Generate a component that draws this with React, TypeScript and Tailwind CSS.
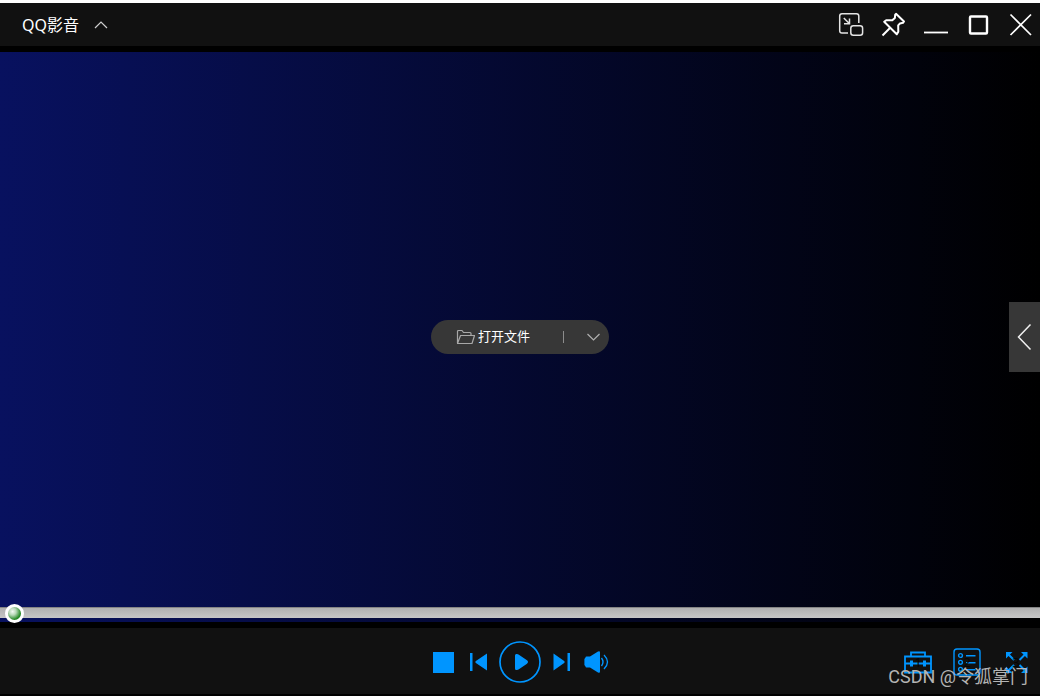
import { useState } from 'react';
import type { ReactNode } from 'react';

function WindowButton({ label, children }: { label: string; children: ReactNode }) {
  return (
    <button type="button" aria-label={label} className="size-6 text-white">
      <svg viewBox="0 0 24 24" fill="none" stroke="currentColor" className="size-6 overflow-visible">
        {children}
      </svg>
    </button>
  );
}

function TitleBar() {
  return (
    <header className="flex h-[43px] shrink-0 items-center justify-between bg-[#111111] pr-2 pl-[22px]">
      <button type="button" className="flex items-center gap-[15px] text-base text-white">
        <span>QQ影音</span>
        <svg viewBox="0 0 14 10" fill="none" stroke="#d0d0d0" strokeWidth="1.200" className="h-2.5 w-3.5">
          <path d="M1 8 7 2l6 6" />
        </svg>
      </button>
      <div className="flex items-center gap-[18px]">
        <WindowButton label="迷你模式">
          <path
            d="M8 20H2Q-.3 20-.3 17.700V3Q-.3 .7 2 .7H16.500Q18.800.7 18.800 3V10"
            strokeWidth="1.500"
            stroke="#e4e4e4"
          />
          <rect x="10.800" y="12.800" width="11.800" height="9.500" rx="2.500" strokeWidth="1.500" stroke="#e4e4e4" />
          <path d="M3.800 5 9.300 10.500M9.500 5.500v5.300H4" strokeWidth="1.500" stroke="#e4e4e4" />
        </WindowButton>
        <WindowButton label="置顶">
          <path
            d="M14 .8 22 8.500l-1 1.300-3 .6-1.800 2 .1 6.300-1.500 2.600L2.200 8.800l2-1.600 6.100.1 2.600-2.400.3-3.200zM7.700 15.300.5 22.500"
            strokeWidth="2"
            strokeLinejoin="round"
          />
        </WindowButton>
        <WindowButton label="最小化">
          <path d="M0 19.500h24" strokeWidth="1.800" />
        </WindowButton>
        <WindowButton label="最大化">
          <rect x="4" y="3.500" width="17" height="17" rx="1" strokeWidth="2.400" />
        </WindowButton>
        <WindowButton label="关闭">
          <path d="M2.500 1.500 23 22M23 1.500 2.500 22" strokeWidth="1.700" />
        </WindowButton>
      </div>
    </header>
  );
}

function OpenFile() {
  return (
    <div className="flex h-[34px] w-[178px] items-center rounded-full bg-[#373737] pr-2 pl-[25px]">
      <button type="button" className="flex items-center gap-[3px] text-[13px] text-white">
        <svg viewBox="0 0 19 16" fill="none" stroke="#a8a8a8" strokeWidth="1.200" strokeLinejoin="round" className="h-4 w-[19px]">
          <path d="M1.500 14V2.500Q1.500 1.500 2.500 1.500H6l1.500 2H14q1 0 1 1v2M1.500 14.500 4.500 6.500H18.500l-2.500 8z" />
        </svg>
        <span>打开文件</span>
      </button>
      <span className="ml-auto h-3 w-px bg-[#8c8c8c]" />
      <button type="button" aria-label="更多打开方式" className="ml-[22px] w-[15px]">
        <svg viewBox="0 0 15 10" fill="none" stroke="#b0b0b0" strokeWidth="1.200" className="h-2.5 w-[15px]">
          <path d="m1.500 2 6 6 6-6" />
        </svg>
      </button>
    </div>
  );
}

function Stage() {
  const [position, setPosition] = useState(5);
  return (
    <main className="flex flex-1 flex-col bg-linear-to-r/srgb from-[#08115f] to-black pt-[15px] pb-1">
      <div className="grid flex-1 grid-cols-[1fr_auto_1fr] items-center">
        <div />
        <OpenFile />
        <button
          type="button"
          aria-label="展开播放列表"
          className="flex h-[70px] w-[31px] items-center justify-center justify-self-end bg-[#373737]"
        >
          <svg viewBox="0 0 16 28" fill="none" stroke="#f0f0f0" strokeWidth="1.500" className="h-7 w-4">
            <path d="M13.500 1.500 1.500 14l12 12.500" />
          </svg>
        </button>
      </div>
      <input
        type="range"
        aria-label="播放进度"
        min={0}
        max={1000}
        value={position}
        onChange={(event) => setPosition(Number(event.target.value))}
        className="m-0 block h-[11px] w-full appearance-none overflow-visible border-t border-[#858585] bg-linear-to-b from-[#b0b0b0] to-[#c6c6c6] [&::-webkit-slider-thumb]:size-[19px] [&::-webkit-slider-thumb]:appearance-none [&::-webkit-slider-thumb]:rounded-full [&::-webkit-slider-thumb]:border-[3px] [&::-webkit-slider-thumb]:border-white [&::-webkit-slider-thumb]:bg-[radial-gradient(circle_at_35%_35%,#f4faf4_0%,#b7d8b7_30%,#2f8f2f_65%,#067006_85%)]"
      />
    </main>
  );
}

function Transport() {
  return (
    <div className="flex items-center gap-3 text-[#0095ff]">
      <button type="button" aria-label="停止">
        <svg viewBox="0 0 28 24" fill="currentColor" className="h-6 w-7">
          <rect x="6" y="2" width="21" height="21" />
        </svg>
      </button>
      <button type="button" aria-label="上一个">
        <svg viewBox="0 0 20 24" fill="currentColor" className="h-6 w-5">
          <path d="M3 3h2.500v18H3zM20 3.500v17L8.500 12.700v-1.400z" />
        </svg>
      </button>
      <button type="button" aria-label="播放">
        <svg viewBox="0 0 42 42" fill="none" className="size-[42px]">
          <circle cx="21" cy="21" r="20" stroke="currentColor" strokeWidth="1.700" />
          <path d="M16 14.500q0-2 2-1.500 1.500.3 3 1.500l7 4.800q2 1.700 0 3.400l-7 4.800q-1.500 1.200-3 1.500-2 .5-2-1.500z" fill="currentColor" />
        </svg>
      </button>
      <button type="button" aria-label="下一个">
        <svg viewBox="0 0 20 24" fill="currentColor" className="h-6 w-5">
          <path d="M14.500 3H17v18h-2.500zM.5 3.500v17l11-7.800v-1.400z" />
        </svg>
      </button>
      <button type="button" aria-label="音量">
        <svg viewBox="0 0 28 24" fill="none" stroke="currentColor" className="h-6 w-7 overflow-visible">
          <path
            d="M1.500 6.500H5L13 1.500Q15 .5 15 2.500v19q0 2-2 1L5 17.500H1.500Q.5 17.500.5 16.500L-.6 15V9L.5 7.500Q.5 6.500 1.500 6.500z"
            fill="currentColor"
            stroke="none"
          />
          <path d="M16.500 8q3 4 0 8" strokeWidth="1.400" />
          <path d="M19 5q7 7 0 14" strokeWidth="1.300" />
        </svg>
      </button>
    </div>
  );
}

function ToolButton({ label, index, children }: { label: string; index: number; children: ReactNode }) {
  return (
    <button type="button" aria-label={label} className="grid size-7 place-items-center text-[#0095ff]">
      <svg viewBox="0 0 28 28" fill="none" stroke="currentColor" className="col-start-1 row-start-1 size-7">
        {children}
      </svg>
      <span className="col-start-1 row-start-1 text-[13px] leading-4 text-[#050505]">{index}</span>
    </button>
  );
}

function ControlBar() {
  return (
    <footer className="relative grid h-[66px] shrink-0 grid-cols-[1fr_auto_1fr] items-center bg-[#111111] pt-[2px]">
      <div />
      <Transport />
      <div className="flex gap-[21px] justify-self-end pr-2.5">
        <ToolButton label="工具箱" index={1}>
          <path
            d="M1 8.500h26v16H1zM7 8.500v-4h14v4M1 15.500h5M9 15.500h10M22 15.500h5"
            strokeWidth="1.800"
          />
          <path d="M6 12.500h3v6H6zM19 12.500h3v6h-3z" fill="currentColor" stroke="none" />
        </ToolButton>
        <ToolButton label="播放列表" index={2}>
          <rect x="1" y="1" width="26" height="26" rx="3" strokeWidth="1.400" />
          <g strokeWidth="1.400">
            <circle cx="7.500" cy="7.500" r="1.900" />
            <circle cx="7.500" cy="14.300" r="1.900" />
            <circle cx="7.500" cy="21.300" r="1.900" />
            <path d="M13 7.800h9.500M13 14.800h9.500M13 21.800h9.500" />
          </g>
        </ToolButton>
        <ToolButton label="全屏" index={3}>
          <path d="m6 6 6 6M23.500 6l-6 6M6 23l6-6M23.500 23l-6-6" strokeWidth="2" />
          <path d="M4 4h6.500L4 10.500zM25.500 4H19l6.500 6.500zM4 25h6.500L4 18.500zM25.500 25H19l6.500-6.500z" fill="currentColor" stroke="none" />
        </ToolButton>
      </div>
      <span className="pointer-events-none absolute right-3 bottom-[5px] font-['Roboto','Noto_Sans_CJK_SC',sans-serif] text-lg leading-6 text-[#b4b4b4]">
        CSDN @令狐掌门
      </span>
    </footer>
  );
}

export default function App() {
  return (
    <div className="flex min-h-screen flex-col border-t-[3px] border-b-2 border-t-white border-b-black bg-black font-['Noto_Sans','Noto_Sans_CJK_SC',sans-serif]">
      <TitleBar />
      <div className="h-1.5 shrink-0" />
      <Stage />
      <div className="h-1.5 shrink-0" />
      <ControlBar />
    </div>
  );
}
